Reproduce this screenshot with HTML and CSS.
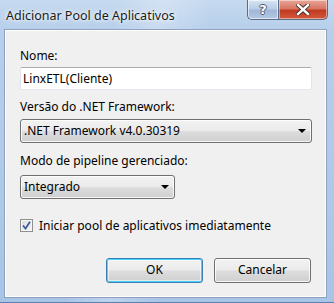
FILE: index.html
```html
<!DOCTYPE html>
<html>
<head>
<meta charset="utf-8">
<link rel="stylesheet" href="styles.css">
</head>
<body>
<div class="window">
  <div class="titlebar">
    <span class="title">Adicionar Pool de Aplicativos</span>
    <div class="caption-buttons">
      <div class="cbtn help"><span>?</span></div>
      <div class="cbtn close">
        <svg width="14" height="11" viewBox="0 0 14 11">
          <path d="M2 1 L12 10 M12 1 L2 10" stroke="#3a2a28" stroke-width="4.2" stroke-linecap="square" fill="none"/>
          <path d="M2 1 L12 10 M12 1 L2 10" stroke="#ffffff" stroke-width="2.4" stroke-linecap="square" fill="none"/>
        </svg>
      </div>
    </div>
  </div>
  <div class="client">
    <div class="label l-nome">Nome:</div>
    <div class="textbox">LinxETL(Cliente)</div>
    <div class="label l-versao">Versão do .NET Framework:</div>
    <div class="combo wide"><span>.NET Framework v4.0.30319</span><i class="arrow"></i></div>
    <div class="label l-modo">Modo de pipeline gerenciado:</div>
    <div class="combo narrow"><span>Integrado</span><i class="arrow"></i></div>
    <div class="check-row">
      <div class="checkbox">
        <svg width="9" height="9" viewBox="0 0 9 9"><path d="M1 4.5 L3.5 7.5 L8 0.8" stroke="#3b5a9e" stroke-width="1.7" fill="none"/></svg>
      </div>
      <span>Iniciar pool de aplicativos imediatamente</span>
    </div>
    <div class="buttons">
      <div class="btn default">OK</div>
      <div class="btn">Cancelar</div>
    </div>
  </div>
</div>
</body>
</html>
```

FILE: styles.css
```css
html, body {
  margin: 0;
  padding: 0;
  background: #ffffff;
}
body {
  width: 334px;
  height: 303px;
  overflow: hidden;
  font-family: "Noto Sans", "Open Sans", "DejaVu Sans", sans-serif;
  font-size: 12px;
  color: #000;
}
.window {
  width: 334px;
  height: 303px;
  box-sizing: border-box;
  display: flex;
  flex-direction: column;
  background:
    linear-gradient(100deg, rgba(255,255,255,0) 30%, rgba(255,255,255,0.25) 42%, rgba(255,255,255,0) 55%),
    linear-gradient(180deg, #c6d9ef 0%, #b7cfeb 10%, #a8c4e6 100%);
  border-bottom: 1px solid #5b7fae;
}
.titlebar {
  height: 29px;
  flex: none;
  display: flex;
  align-items: flex-start;
  justify-content: space-between;
}
.title {
  margin: 8px 0 0 6px;
  font-size: 12.5px;
  line-height: 16px;
  color: #1a1a1a;
  text-shadow: 0 0 6px #ffffff, 0 0 3px #ffffff;
}
.caption-buttons {
  display: flex;
  margin-right: 6px;
}
.cbtn {
  height: 20px;
  box-sizing: border-box;
  border: 1px solid #5a6d86;
  border-top: none;
  display: flex;
  align-items: center;
  justify-content: center;
}
.help {
  width: 31px;
  border-right: none;
  border-radius: 0 0 0 5px;
  background: linear-gradient(180deg, #d7e4f3 0%, #b9cde6 48%, #9fb7d6 52%, #b3c8e2 100%);
  box-shadow: inset 0 0 0 1px rgba(255,255,255,0.6);
}
.help span {
  font-family: "DejaVu Sans", sans-serif;
  font-weight: bold;
  font-size: 13px;
  color: #fff;
  text-shadow: -1px 0 #4b5a6e, 1px 0 #4b5a6e, 0 -1px #4b5a6e, 0 1px #4b5a6e;
  line-height: 14px;
}
.close {
  width: 50px;
  border-radius: 0 0 5px 0;
  background: linear-gradient(180deg, #e9a799 0%, #d77663 45%, #c03a22 55%, #d2583c 100%);
  box-shadow: inset 0 0 0 1px rgba(255,255,255,0.45);
}
.client {
  margin: 0 7px 4px 4px;
  flex: 1;
  box-sizing: border-box;
  background: #f0f0f0;
  border: 1px solid #8ea2bd;
  box-shadow: inset 0 0 0 1px #ffffff;
  padding: 18px 14px 0 15px;
  display: flex;
  flex-direction: column;
  align-items: flex-start;
}
.label {
  line-height: 16px;
  height: 16px;
  white-space: nowrap;
}
.l-versao { margin-top: 9px; }
.l-modo { margin-top: 10px; }
.textbox {
  margin-top: 3px;
  width: 292px;
  height: 23px;
  box-sizing: border-box;
  background: #fff;
  border: 1px solid #e2e3ea;
  border-top-color: #abadb3;
  border-bottom-color: #e3e9ef;
  border-radius: 2px;
  padding: 0 0 0 2px;
  line-height: 21px;
}
.combo {
  height: 24px;
  box-sizing: border-box;
  border: 1px solid #707070;
  border-radius: 3px;
  background: linear-gradient(180deg, #f2f2f2 0%, #ebebeb 48%, #dddddd 52%, #cfcfcf 100%);
  box-shadow: inset 0 0 0 1px rgba(255,255,255,0.8);
  display: flex;
  align-items: center;
  justify-content: space-between;
  padding: 0 4px 0 3px;
}
.combo.wide { width: 292px; margin-top: 4px; }
.combo.narrow { width: 155px; margin-top: 6px; }
.combo span { line-height: 20px; }
.arrow {
  width: 0;
  height: 0;
  border-left: 4px solid transparent;
  border-right: 4px solid transparent;
  border-top: 4px solid #000;
  margin-right: 1px;
}
.check-row {
  margin-top: 19px;
  display: flex;
  align-items: center;
  gap: 6px;
  height: 14px;
  line-height: 16px;
}
.checkbox {
  width: 13px;
  height: 13px;
  box-sizing: border-box;
  border: 1px solid #8e8f8f;
  background: linear-gradient(135deg, #dcdcdc 0%, #f4f4f4 100%);
  box-shadow: inset 0 0 0 1px #f6f6f6;
  display: flex;
  align-items: center;
  justify-content: center;
}
.check-row span { margin-top: 1px; }
.buttons {
  margin-top: 26px;
  align-self: stretch;
  display: flex;
  justify-content: flex-end;
  gap: 11px;
  padding-right: 1px;
}
.btn {
  width: 97px;
  height: 25px;
  box-sizing: border-box;
  border: 1px solid #707070;
  border-radius: 3px;
  background: linear-gradient(180deg, #f2f2f2 0%, #ebebeb 48%, #dddddd 52%, #cfcfcf 100%);
  box-shadow: inset 0 0 0 1px rgba(255,255,255,0.8);
  text-align: center;
  line-height: 22px;
}
.btn.default {
  border-color: #3c7fb1;
  box-shadow: inset 0 0 0 1px #48d1ff, inset 0 0 0 2px rgba(255,255,255,0.5);
}
```
